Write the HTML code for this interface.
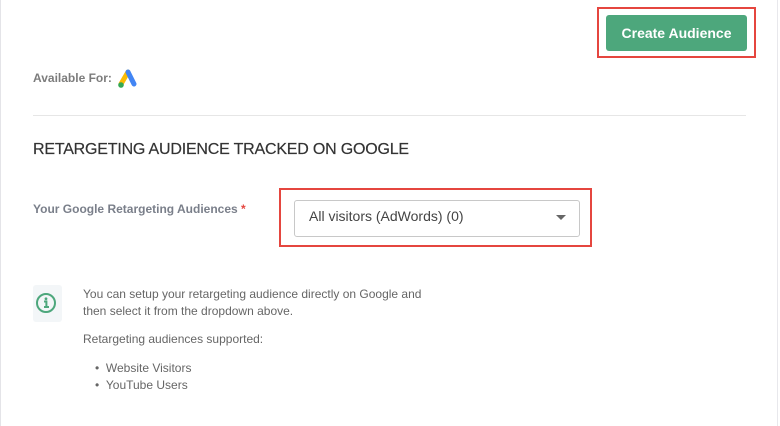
<!DOCTYPE html>
<html><head><style>
body{margin:0;width:780px;height:426px;background:#fff;font-family:"Liberation Sans",sans-serif;position:relative;overflow:hidden}
.a{position:absolute;white-space:nowrap}
</style></head><body>
<div class="a" style="left:0;top:0;width:1px;height:426px;background:#e4e4e8"></div>
<div class="a" style="left:777px;top:0;width:1px;height:426px;background:#e8e8ec"></div>
<div class="a" style="left:597px;top:7px;width:155px;height:47px;border:2px solid #e5463f"></div>
<div class="a" style="left:606px;top:15px;width:141px;height:36px;background:#4da77c;border-radius:3px;color:#fff;font-weight:bold;font-size:14px;line-height:36px;text-align:center">Create Audience</div>
<div class="a" style="left:33px;top:71px;font-size:12px;color:#666;font-weight:bold;opacity:.85">Available For:</div>
<svg class="a" style="left:116px;top:69px" width="22" height="20" viewBox="0 0 22 20">
<line x1="12" y1="3" x2="5" y2="15" stroke="#fbbc04" stroke-width="5" stroke-linecap="round"/>
<line x1="12" y1="3" x2="18" y2="15" stroke="#4285f4" stroke-width="5" stroke-linecap="round"/>
<circle cx="5" cy="16" r="2.8" fill="#34a853"/>
</svg>
<div class="a" style="left:33px;top:115px;width:713px;height:1px;background:#e6e6e6"></div>
<div class="a" style="left:33px;top:141px;font-size:16px;color:#333;-webkit-text-stroke:0.2px #333;letter-spacing:-0.2px">RETARGETING AUDIENCE TRACKED ON GOOGLE</div>
<div class="a" style="left:33px;top:202px;font-size:12px;color:#7a7f8a;font-weight:bold">Your Google Retargeting Audiences <span style="color:#e5463f">*</span></div>
<div class="a" style="left:279px;top:188px;width:309px;height:55px;border:2px solid #e5463f"></div>
<div class="a" style="left:294px;top:200px;width:284px;height:35px;border:1px solid #c8c8c8;border-radius:3px"></div>
<div class="a" style="left:309px;top:208px;font-size:14px;color:#444">All visitors (AdWords) (0)</div>
<div class="a" style="left:556px;top:215px;width:0;height:0;border-left:5px solid transparent;border-right:5px solid transparent;border-top:5px solid #666"></div>
<div class="a" style="left:33px;top:285px;width:29px;height:37px;background:#f3f6f8;border-radius:3px"></div>
<svg class="a" style="left:35px;top:292px" width="22" height="22" viewBox="0 0 22 22">
<circle cx="11" cy="11" r="9" fill="none" stroke="#4da77c" stroke-width="2"/>
<circle cx="11" cy="6.8" r="1.4" fill="#4da77c"/>
<path d="M9 9.5h2.4v5.3M9 15h5" stroke="#4da77c" stroke-width="2" fill="none"/>
</svg>
<div class="a" style="left:83px;top:286px;font-size:12px;color:#666;line-height:17px">You can setup your retargeting audience directly on Google and<br>then select it from the dropdown above.</div>
<div class="a" style="left:83px;top:332px;font-size:12px;color:#666">Retargeting audiences supported:</div>
<div class="a" style="left:95px;top:360px;font-size:12px;color:#666;line-height:17px">•&nbsp;&nbsp;Website Visitors<br>•&nbsp;&nbsp;YouTube Users</div>
</body></html>
